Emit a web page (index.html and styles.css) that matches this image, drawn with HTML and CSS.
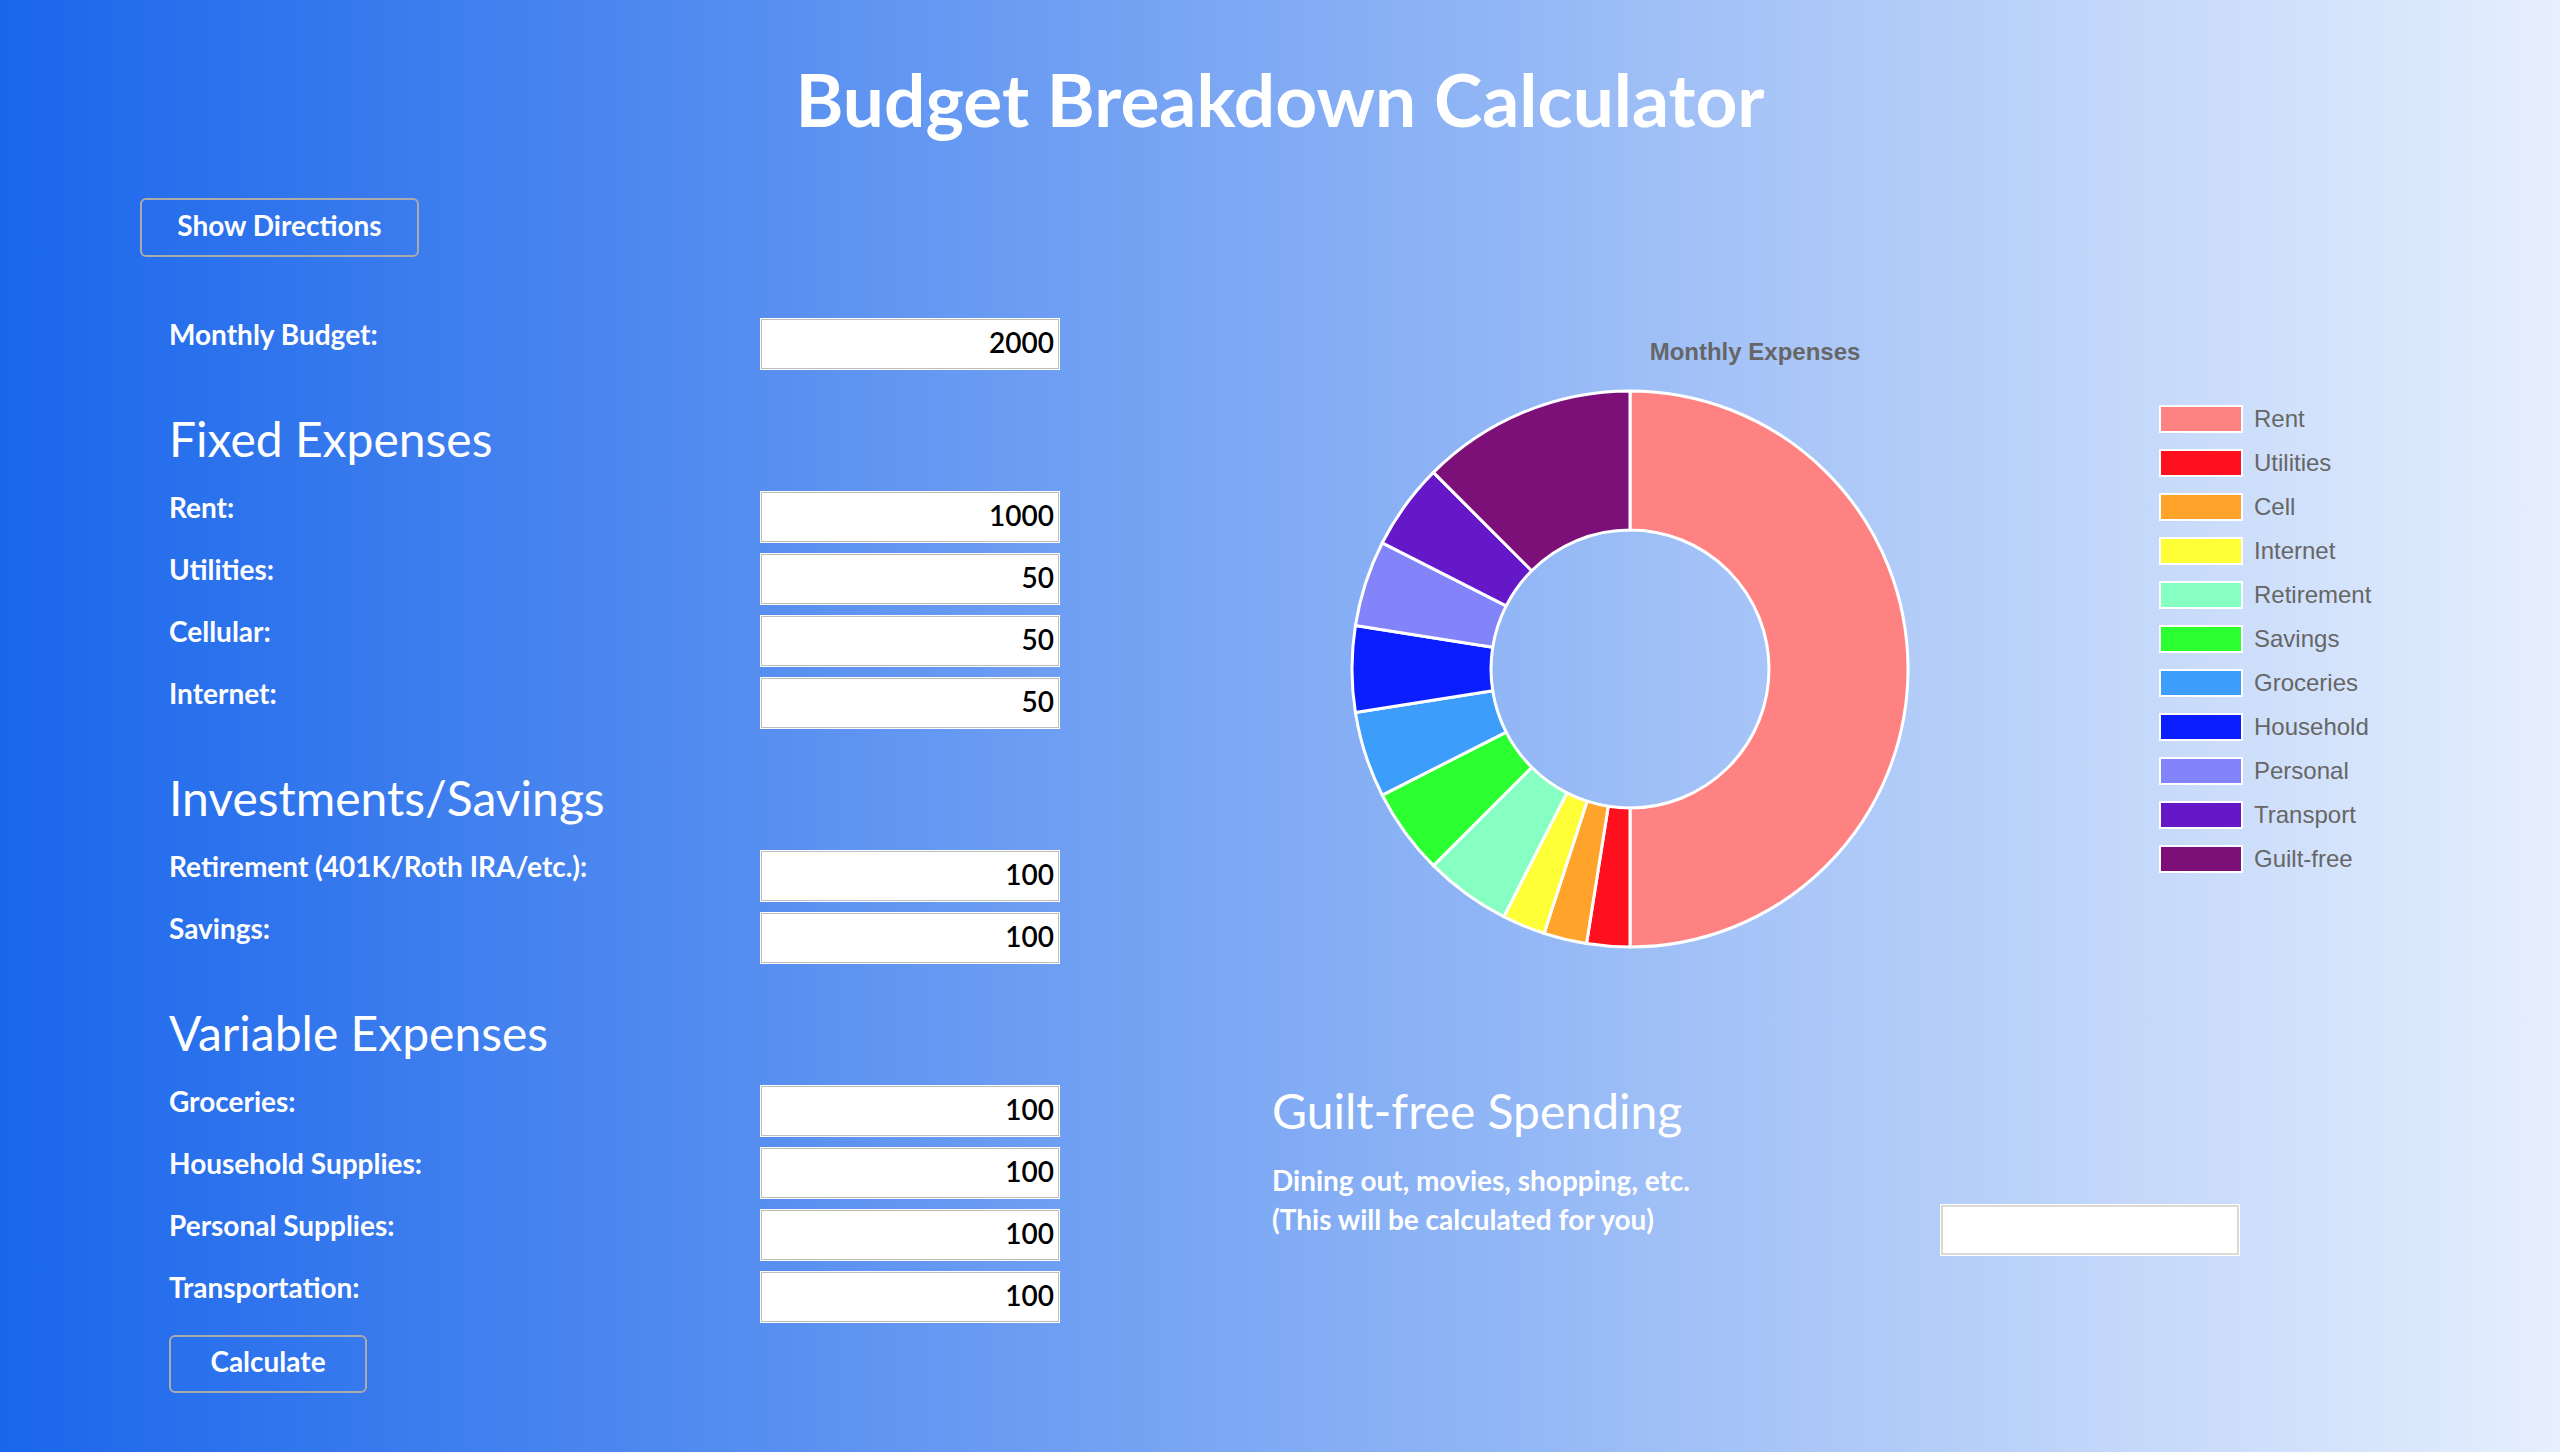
FILE: index.html
```html
<!DOCTYPE html>
<html lang="en">
<head>
<meta charset="utf-8">
<title>Budget Breakdown Calculator</title>
<link rel="stylesheet" href="styles.css">
</head>
<body>
<h1 class="title">Budget Breakdown Calculator</h1>
<button class="btn btn-directions">Show Directions</button>

<div class="main">
  <form class="form">
    <div class="row"><label class="label">Monthly Budget:</label><input class="field" type="text" value="2000"></div>

    <h2 class="section-title">Fixed Expenses</h2>
    <div class="row"><label class="label">Rent:</label><input class="field" type="text" value="1000"></div>
    <div class="row"><label class="label">Utilities:</label><input class="field" type="text" value="50"></div>
    <div class="row"><label class="label">Cellular:</label><input class="field" type="text" value="50"></div>
    <div class="row"><label class="label">Internet:</label><input class="field" type="text" value="50"></div>

    <h2 class="section-title">Investments/Savings</h2>
    <div class="row"><label class="label">Retirement (401K/Roth IRA/etc.):</label><input class="field" type="text" value="100"></div>
    <div class="row"><label class="label">Savings:</label><input class="field" type="text" value="100"></div>

    <h2 class="section-title">Variable Expenses</h2>
    <div class="row"><label class="label">Groceries:</label><input class="field" type="text" value="100"></div>
    <div class="row"><label class="label">Household Supplies:</label><input class="field" type="text" value="100"></div>
    <div class="row"><label class="label">Personal Supplies:</label><input class="field" type="text" value="100"></div>
    <div class="row"><label class="label">Transportation:</label><input class="field" type="text" value="100"></div>

    <button class="btn btn-calc" type="button">Calculate</button>
  </form>

  <div class="side">
    <div class="chart">
      <div class="chart-title">Monthly Expenses</div>
      <div class="chart-body">
        <svg class="donut" width="560" height="560" viewBox="0 0 560 560">
          <g stroke="#ffffff" stroke-width="3" stroke-linejoin="round">
            <path fill="#ff8282" d="M280,2 A278,278 0 0 1 280,558 L280,419 A139,139 0 0 0 280,141 Z"/>
            <path fill="#ff101f" d="M280,558 A278,278 0 0 1 236.51,554.58 L258.26,417.29 A139,139 0 0 0 280,419 Z"/>
            <path fill="#ffa32a" d="M236.51,554.58 A278,278 0 0 1 194.09,544.39 L237.05,412.19 A139,139 0 0 0 258.26,417.29 Z"/>
            <path fill="#ffff38" d="M194.09,544.39 A278,278 0 0 1 153.79,527.70 L216.90,403.85 A139,139 0 0 0 237.05,412.19 Z"/>
            <path fill="#88ffc2" d="M153.79,527.70 A278,278 0 0 1 83.42,476.58 L181.71,378.29 A139,139 0 0 0 216.90,403.85 Z"/>
            <path fill="#2bff30" d="M83.42,476.58 A278,278 0 0 1 32.30,406.21 L156.15,343.10 A139,139 0 0 0 181.71,378.29 Z"/>
            <path fill="#3c9dfb" d="M32.30,406.21 A278,278 0 0 1 5.42,323.49 L142.71,301.74 A139,139 0 0 0 156.15,343.10 Z"/>
            <path fill="#0b1eff" d="M5.42,323.49 A278,278 0 0 1 5.42,236.51 L142.71,258.26 A139,139 0 0 0 142.71,301.74 Z"/>
            <path fill="#8383fa" d="M5.42,236.51 A278,278 0 0 1 32.30,153.79 L156.15,216.90 A139,139 0 0 0 142.71,258.26 Z"/>
            <path fill="#6418c8" d="M32.30,153.79 A278,278 0 0 1 83.42,83.42 L181.71,181.71 A139,139 0 0 0 156.15,216.90 Z"/>
            <path fill="#7d0f79" d="M83.42,83.42 A278,278 0 0 1 280,2 L280,141 A139,139 0 0 0 181.71,181.71 Z"/>
          </g>
        </svg>
        <ul class="legend">
          <li class="legend-item"><span class="swatch sw-rent"></span>Rent</li>
          <li class="legend-item"><span class="swatch sw-util"></span>Utilities</li>
          <li class="legend-item"><span class="swatch sw-cell"></span>Cell</li>
          <li class="legend-item"><span class="swatch sw-net"></span>Internet</li>
          <li class="legend-item"><span class="swatch sw-ret"></span>Retirement</li>
          <li class="legend-item"><span class="swatch sw-sav"></span>Savings</li>
          <li class="legend-item"><span class="swatch sw-groc"></span>Groceries</li>
          <li class="legend-item"><span class="swatch sw-house"></span>Household</li>
          <li class="legend-item"><span class="swatch sw-pers"></span>Personal</li>
          <li class="legend-item"><span class="swatch sw-trans"></span>Transport</li>
          <li class="legend-item"><span class="swatch sw-guilt"></span>Guilt-free</li>
        </ul>
      </div>
    </div>

    <div class="guilt">
      <div class="guilt-text">
        <h2 class="section-title guilt-title">Guilt-free Spending</h2>
        <p class="guilt-desc">Dining out, movies, shopping, etc.<br>(This will be calculated for you)</p>
      </div>
      <input class="field field-result" type="text" value="" readonly>
    </div>
  </div>
</div>
</body>
</html>
```

FILE: styles.css
```css
* { box-sizing: border-box; }

html, body {
  margin: 0;
  padding: 0;
}

body {
  min-height: 1452px;
  background: linear-gradient(to right, #1a66eb 0%, #e6effd 100%);
  font-family: "Lato", "Open Sans", sans-serif;
  color: #ffffff;
}

.title {
  margin: 0;
  padding-top: 63px;
  font-size: 73px;
  line-height: 72px;
  font-weight: 700;
  text-align: center;
}

.btn {
  display: block;
  background: transparent;
  color: #ffffff;
  font-family: "Lato", "Open Sans", sans-serif;
  font-weight: 700;
  border: 2px solid #ababab;
  border-radius: 6px;
  padding: 0;
  cursor: pointer;
}

.btn-directions {
  margin: 63px 0 0 140px;
  width: 279px;
  height: 59px;
  font-size: 28px;
  padding-bottom: 6px;
}

.main {
  display: grid;
  grid-template-columns: 891px 1fr;
  column-gap: 212px;
  padding-left: 169px;
  margin-top: 61px;
  align-items: start;
}

.form {
  margin: 0;
}

.row {
  display: flex;
  align-items: flex-start;
  justify-content: space-between;
  height: 52px;
  margin-bottom: 10px;
}

.label {
  flex: 1;
  font-size: 28px;
  line-height: 28px;
  font-weight: 700;
  padding-top: 2px;
}

.field {
  width: 300px;
  height: 52px;
  border: 1px solid #ffffff;
  box-shadow: inset 0 0 0 1px #bdbdbd;
  background: #ffffff;
  text-align: right;
  font-family: "Lato", "Open Sans", sans-serif;
  font-size: 28px;
  font-weight: 600;
  color: #000000;
  padding: 0 5px 4px 7px;
  outline: none;
}

.section-title {
  margin: 45px 0 28px;
  font-size: 48px;
  line-height: 48px;
  font-weight: 400;
}

.btn-calc {
  margin-top: 12px;
  width: 198px;
  height: 58px;
  font-size: 28px;
  padding-bottom: 6px;
}

.side {
  padding-top: 22px;
}

.chart-title {
  width: 966px;
  text-align: center;
  font-family: "Liberation Sans", Arial, sans-serif;
  font-weight: 700;
  font-size: 24px;
  line-height: 24px;
  color: #666666;
}

.chart-body {
  display: flex;
  align-items: flex-start;
  margin-top: 25px;
}

.donut {
  display: block;
  margin-left: 78px;
  flex: none;
}

.legend {
  list-style: none;
  margin: 0 0 0 249px;
  padding: 16px 0 0;
}

.legend-item {
  display: flex;
  align-items: center;
  height: 28px;
  margin-bottom: 16px;
  font-family: "Liberation Sans", Arial, sans-serif;
  font-size: 24px;
  line-height: 28px;
  color: #666666;
}

.swatch {
  display: block;
  width: 84px;
  height: 28px;
  border: 2px solid #ffffff;
  margin-right: 11px;
  flex: none;
}

.sw-rent { background: #ff8282; }
.sw-util { background: #ff101f; }
.sw-cell { background: #ffa32a; }
.sw-net { background: #ffff38; }
.sw-ret { background: #88ffc2; }
.sw-sav { background: #2bff30; }
.sw-groc { background: #3c9dfb; }
.sw-house { background: #0b1eff; }
.sw-pers { background: #8383fa; }
.sw-trans { background: #6418c8; }
.sw-guilt { background: #7d0f79; }

.guilt {
  display: flex;
  align-items: flex-start;
  margin-top: 138px;
}

.guilt-text {
  width: 668px;
  flex: none;
}

.guilt-title {
  margin: 0;
}

.guilt-desc {
  margin: 26px 0 0;
  font-size: 28px;
  line-height: 39px;
  font-weight: 700;
}

.field-result {
  margin-top: 117px;
  box-shadow: inset 0 0 0 2px #dddad6;
}
```
